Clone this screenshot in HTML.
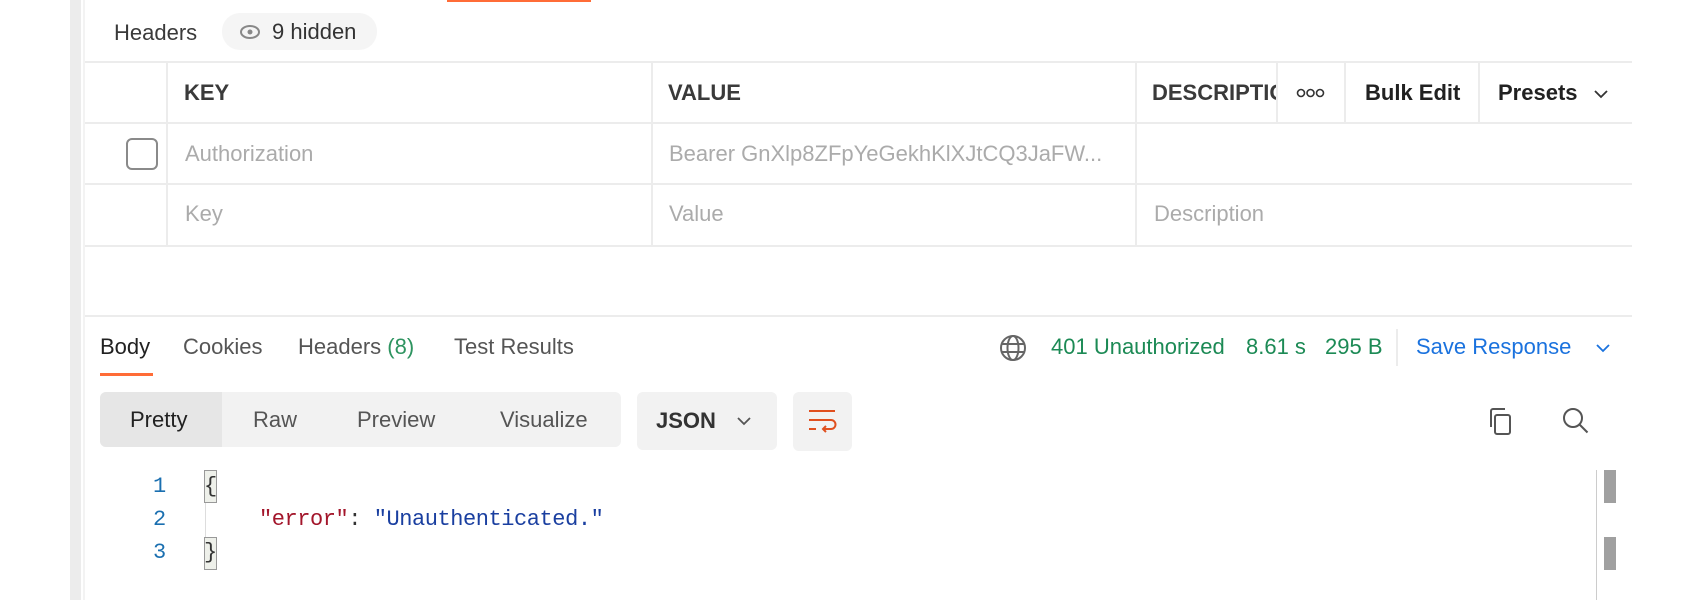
<!DOCTYPE html>
<html><head><meta charset="utf-8"><style>
*{margin:0;padding:0;box-sizing:border-box}
body{width:1700px;height:600px;background:#fff;position:relative;overflow:hidden;font-family:"Liberation Sans",sans-serif;color:#212121}
.a{position:absolute;white-space:nowrap}
.hl{position:absolute;height:2px;background:#ececec}
.vl{position:absolute;width:2px;background:#ececec}
.t{font-size:22px;line-height:26px}
.g{color:#ababab}
.b{font-weight:bold}
.mono{font-family:"Liberation Mono",monospace;font-size:22px;line-height:26px;letter-spacing:-0.45px}
</style></head><body>
<div class="a" style="left:70px;top:0;width:11px;height:600px;background:#ececec"></div>
<div class="a" style="left:83px;top:0;width:2px;height:600px;background:#f3f3f3"></div>
<div class="a" style="left:447px;top:0;width:144px;height:2px;background:#ff6c37"></div>

<div class="a t" style="left:114px;top:20px;color:#3a3a3a">Headers</div>
<div class="a" style="left:222px;top:13px;width:155px;height:37px;border-radius:18px;background:#f5f5f5"></div>
<svg class="a" style="left:239px;top:24px" width="22" height="16" viewBox="0 0 22 16"><ellipse cx="11" cy="8" rx="9" ry="6" fill="none" stroke="#888" stroke-width="2"/><circle cx="11" cy="8" r="2.5" fill="#888"/></svg>
<div class="a t" style="left:272px;top:19px;color:#333">9 hidden</div>

<div class="hl" style="left:85px;top:61px;width:1547px"></div>
<div class="hl" style="left:85px;top:122px;width:1547px"></div>
<div class="hl" style="left:85px;top:183px;width:1547px"></div>
<div class="hl" style="left:85px;top:245px;width:1547px"></div>
<div class="vl" style="left:166px;top:62px;height:184px"></div>
<div class="vl" style="left:651px;top:62px;height:184px"></div>
<div class="vl" style="left:1135px;top:62px;height:184px"></div>
<div class="vl" style="left:1276px;top:62px;height:61px"></div>
<div class="vl" style="left:1344px;top:62px;height:61px"></div>
<div class="vl" style="left:1478px;top:62px;height:61px"></div>

<div class="a t b" style="left:184px;top:80px;color:#3a3a3a">KEY</div>
<div class="a t b" style="left:668px;top:80px;color:#3a3a3a">VALUE</div>
<div class="a t b" style="left:1152px;top:80px;width:124px;overflow:hidden;color:#3a3a3a">DESCRIPTION</div>
<svg class="a" style="left:1296px;top:87px" width="30" height="12"><circle cx="5" cy="6" r="3.5" fill="none" stroke="#333" stroke-width="1.6"/><circle cx="14.5" cy="6" r="3.5" fill="none" stroke="#333" stroke-width="1.6"/><circle cx="24" cy="6" r="3.5" fill="none" stroke="#333" stroke-width="1.6"/></svg>
<div class="a t b" style="left:1365px;top:80px">Bulk Edit</div>
<div class="a t b" style="left:1498px;top:80px">Presets</div>
<svg class="a" style="left:1593px;top:88px" width="16" height="12"><path d="M2 3l6 6 6-6" fill="none" stroke="#333" stroke-width="1.8"/></svg>

<div class="a" style="left:126px;top:138px;width:32px;height:32px;border:2px solid #8a8a8a;border-radius:6px"></div>
<div class="a t g" style="left:185px;top:141px">Authorization</div>
<div class="a t g" style="left:669px;top:141px">Bearer GnXlp8ZFpYeGekhKlXJtCQ3JaFW...</div>
<div class="a t g" style="left:185px;top:201px">Key</div>
<div class="a t g" style="left:669px;top:201px">Value</div>
<div class="a t g" style="left:1154px;top:201px">Description</div>

<div class="hl" style="left:85px;top:315px;width:1547px"></div>
<div class="a t" style="left:100px;top:334px">Body</div>
<div class="a" style="left:100px;top:373px;width:53px;height:3px;background:#ff6c37"></div>
<div class="a t" style="left:183px;top:334px;color:#555">Cookies</div>
<div class="a t" style="left:298px;top:334px;color:#555">Headers <span style="color:#2e9460">(8)</span></div>
<div class="a t" style="left:454px;top:334px;color:#555">Test Results</div>

<svg class="a" style="left:999px;top:334px" width="28" height="28" viewBox="0 0 28 28" fill="none" stroke="#666" stroke-width="2"><circle cx="14" cy="14" r="12"/><ellipse cx="14" cy="14" rx="5.5" ry="12"/><path d="M2.5 10h23M2.5 18h23"/></svg>
<div class="a t" style="left:1051px;top:334px;color:#1c8a55">401 Unauthorized</div>
<div class="a t" style="left:1246px;top:334px;color:#1c8a55">8.61 s</div>
<div class="a t" style="left:1325px;top:334px;color:#1c8a55">295 B</div>
<div class="vl" style="left:1396px;top:329px;height:37px"></div>
<div class="a t" style="left:1416px;top:334px;color:#1a72de">Save Response</div>
<svg class="a" style="left:1595px;top:342px" width="16" height="12"><path d="M2 3l6 6 6-6" fill="none" stroke="#1a72de" stroke-width="1.8"/></svg>

<div class="a" style="left:100px;top:392px;width:521px;height:55px;background:#f2f2f2;border-radius:6px"></div>
<div class="a" style="left:100px;top:392px;width:122px;height:55px;background:#e6e6e6;border-radius:6px 0 0 6px"></div>
<div class="a t" style="left:130px;top:407px">Pretty</div>
<div class="a t" style="left:253px;top:407px;color:#555">Raw</div>
<div class="a t" style="left:357px;top:407px;color:#555">Preview</div>
<div class="a t" style="left:500px;top:407px;color:#555">Visualize</div>
<div class="a" style="left:637px;top:392px;width:140px;height:58px;background:#f2f2f2;border-radius:6px"></div>
<div class="a t b" style="left:656px;top:408px;color:#333">JSON</div>
<svg class="a" style="left:736px;top:415px" width="16" height="12"><path d="M2 3l6 6 6-6" fill="none" stroke="#555" stroke-width="1.8"/></svg>
<div class="a" style="left:793px;top:392px;width:59px;height:59px;background:#f2f2f2;border-radius:6px"></div>
<svg class="a" style="left:806px;top:405px" width="34" height="34" viewBox="0 0 34 34" fill="none" stroke="#e0501f" stroke-width="2"><path d="M3 6h26M3 15h22a4.5 4.5 0 0 1 0 9h-7M3 24h7M20 21l-3 3 3 3"/></svg>

<svg class="a" style="left:1486px;top:406px" width="30" height="30" viewBox="0 0 30 30" fill="none" stroke="#555" stroke-width="2"><rect x="9" y="9" width="15" height="19" rx="2"/><path d="M5 21V5a2 2 0 0 1 2-2h12"/></svg>
<svg class="a" style="left:1561px;top:406px" width="30" height="30" viewBox="0 0 30 30" fill="none" stroke="#555" stroke-width="2"><circle cx="12" cy="12" r="9"/><path d="M18.5 18.5l8 8"/></svg>

<div class="a mono" style="left:153px;top:474px;color:#1a6fb0">1</div>
<div class="a mono" style="left:153px;top:507px;color:#1a6fb0">2</div>
<div class="a mono" style="left:153px;top:540px;color:#1a6fb0">3</div>
<div class="a" style="left:204px;top:470px;width:13px;height:33px;background:#eef0ea;border:1px solid #999"></div>
<div class="a" style="left:205px;top:503px;width:1px;height:34px;background:#ddd"></div>
<div class="a" style="left:204px;top:537px;width:13px;height:33px;background:#eef0ea;border:1px solid #999"></div>
<div class="a mono" style="left:204px;top:474px;color:#333">{</div>
<div class="a mono" style="left:204px;top:540px;color:#333">}</div>
<div class="a mono" style="left:259px;top:507px"><span style="color:#a3162b">"error"</span><span style="color:#333">: </span><span style="color:#1a3fa0">"Unauthenticated."</span></div>

<div class="a" style="left:1596px;top:470px;width:1px;height:130px;background:#ccc"></div>
<div class="a" style="left:1604px;top:470px;width:12px;height:33px;background:#a0a0a0"></div>
<div class="a" style="left:1604px;top:537px;width:12px;height:33px;background:#a0a0a0"></div>
</body></html>
